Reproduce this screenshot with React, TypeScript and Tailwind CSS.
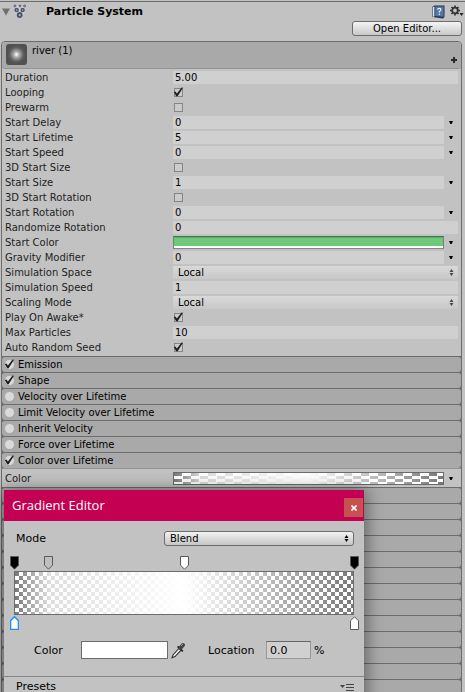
import React from 'react';

type Row = {
  label: string;
  kind: 'text' | 'check' | 'select' | 'color';
  value?: string;
  checked?: boolean;
  menu?: boolean;
};

const rows: Row[] = [
  { label: 'Duration', kind: 'text', value: '5.00' },
  { label: 'Looping', kind: 'check', checked: true },
  { label: 'Prewarm', kind: 'check' },
  { label: 'Start Delay', kind: 'text', value: '0', menu: true },
  { label: 'Start Lifetime', kind: 'text', value: '5', menu: true },
  { label: 'Start Speed', kind: 'text', value: '0', menu: true },
  { label: '3D Start Size', kind: 'check' },
  { label: 'Start Size', kind: 'text', value: '1', menu: true },
  { label: '3D Start Rotation', kind: 'check' },
  { label: 'Start Rotation', kind: 'text', value: '0', menu: true },
  { label: 'Randomize Rotation', kind: 'text', value: '0' },
  { label: 'Start Color', kind: 'color', menu: true },
  { label: 'Gravity Modifier', kind: 'text', value: '0', menu: true },
  { label: 'Simulation Space', kind: 'select', value: 'Local' },
  { label: 'Simulation Speed', kind: 'text', value: '1' },
  { label: 'Scaling Mode', kind: 'select', value: 'Local' },
  { label: 'Play On Awake*', kind: 'check', checked: true },
  { label: 'Max Particles', kind: 'text', value: '10' },
  { label: 'Auto Random Seed', kind: 'check', checked: true },
];

const modules = [
  { label: 'Emission', on: true },
  { label: 'Shape', on: true },
  { label: 'Velocity over Lifetime', on: false },
  { label: 'Limit Velocity over Lifetime', on: false },
  { label: 'Inherit Velocity', on: false },
  { label: 'Force over Lifetime', on: false },
  { label: 'Color over Lifetime', on: true },
];

const toId = (label: string) => label.toLowerCase().replace(/[^a-z0-9]+/g, '-');

const Tick = () => (
  <svg className="pointer-events-none absolute -left-px -top-px hidden peer-checked:block" width="11" height="10" viewBox="0 0 11 10">
    <path d="M0.8 5 L2.4 4.4 L3.9 6.4 L8.6 0.4 L10 0.8 L4.6 9.2 L3.2 9.2 Z" fill="#1e1e1e" />
  </svg>
);

const UpDown = ({ className }: { className: string }) => (
  <svg className={`pointer-events-none absolute ${className}`} width="5" height="7" viewBox="0 0 5 7">
    <path d="M2.5 0 L4.5 3 H0.5 Z M0.5 4 H4.5 L2.5 7 Z" fill="currentColor" />
  </svg>
);

const MenuArrow = ({ label }: { label: string }) => (
  <button aria-label={`${label} mode`} className="flex h-[13px] w-[14px] shrink-0 items-center justify-center">
    <svg width="4" height="3" viewBox="0 0 4 3">
      <path d="M0 0 H4 L2.6 3 H1.4 Z" fill="#000" />
    </svg>
  </button>
);

const PropertyRow = ({ row }: { row: Row }) => {
  const id = toId(row.label);
  return (
    <div className="flex h-[15px] items-center">
      <label htmlFor={id} className="w-[168px] shrink-0 whitespace-nowrap text-[#222]">{row.label}</label>
      {row.kind === 'text' && (
        <input id={id} defaultValue={row.value} className="h-[13px] min-w-0 flex-1 rounded-[1px] bg-[#d0d0d0] px-[2px] text-black outline-none" />
      )}
      {row.kind === 'check' && (
        <span className="relative ml-px h-[9px] w-[9px]">
          <input id={id} type="checkbox" defaultChecked={row.checked} className="peer block h-[9px] w-[9px] appearance-none border border-[#858585] bg-[#cbcbcb]" />
          <Tick />
        </span>
      )}
      {row.kind === 'select' && (
        <span className="relative h-[13px] flex-1">
          <select id={id} defaultValue={row.value} className="block h-[13px] w-full appearance-none rounded-[1px] bg-linear-to-b from-[#d9d9d9] to-[#c8c8c8] px-[5px] text-black outline-none">
            <option>Local</option>
            <option>World</option>
          </select>
          <UpDown className="right-1 top-[3px] text-[#4a4a4a]" />
        </span>
      )}
      {row.kind === 'color' && (
        <button id={id} className="flex h-[13px] flex-1 flex-col border border-t-[#45754c] border-x-[#6a8a6e] border-b-[#858585] bg-white">
          <span className="h-[9px] w-full border-t border-t-[#5cab67] bg-[#6fc97b]"></span>
        </button>
      )}
      {row.menu && <MenuArrow label={row.label} />}
    </div>
  );
};

// Alpha key above the bar points down, colour key below the bar points up
const Key = ({ fill, stroke = '#5a5a5a', up = false }: { fill: string; stroke?: string; up?: boolean }) => (
  <svg width="9" height="14" viewBox="0 0 9 14">
    <path
      d={up ? 'M0.5 13.5 V4.8 L4.5 0.8 L8.5 4.8 V13.5 Z' : 'M0.5 0.5 V9.2 L4.5 13.2 L8.5 9.2 V0.5 Z'}
      fill={fill}
      stroke={stroke}
      strokeWidth={stroke === '#5a5a5a' ? 1 : 1.6}
    />
  </svg>
);

const GradientEditor = () => (
  <section className="absolute left-1 top-[490px] w-[360px] bg-[#c2c2c2] pb-4 text-[11px] text-black shadow-[0_2px_16px_2px_rgba(0,0,0,0.45)]">
    <header className="flex h-[31px] items-center justify-between bg-[#c30052] pl-2 pr-px">
      <h2 className="font-['Open_Sans',sans-serif] text-[13px] text-white">Gradient Editor</h2>
      <button aria-label="Close" className="mt-1 flex h-[19px] w-[19px] items-center justify-center bg-[#c75050]">
        <svg width="6" height="6" viewBox="0 0 6 6">
          <path d="M0.5 0.5 L5.5 5.5 M5.5 0.5 L0.5 5.5" stroke="#fff" strokeWidth="1.6" />
        </svg>
      </button>
    </header>

    <div className="px-[10px]">
      <div className="mt-[10px] flex h-[15px] items-center">
        <label htmlFor="mode" className="w-[150px] pl-[2px]">Mode</label>
        <span className="relative flex-1">
          <select id="mode" className="block h-[15px] w-full appearance-none rounded-[3px] border border-[#6c6c6c] bg-linear-to-b from-[#f2f2f2] to-[#c6c6c6] px-[5px] text-[10px] leading-[12px] outline-none">
            <option>Blend</option>
            <option>Fixed</option>
          </select>
          <UpDown className="right-[5px] top-1 text-black" />
        </span>
      </div>

      <div className="relative mt-[10px] h-[15px]">
        <button aria-label="Alpha 0%" className="absolute left-0 -ml-1"><Key fill="#000" /></button>
        <button aria-label="Alpha 10%" className="absolute left-[10%] -ml-1"><Key fill="#bfbfbf" /></button>
        <button aria-label="Alpha 50%" className="absolute left-1/2 -ml-1"><Key fill="#fff" /></button>
        <button aria-label="Alpha 100%" className="absolute left-full -ml-1"><Key fill="#000" /></button>
      </div>
      <div className="h-[44px] border border-[#6c6c6c] bg-[conic-gradient(#fff_25%,#787878_0_50%,#fff_0_75%,#787878_0)] bg-size-[8px_8px]">
        <div className="h-full bg-[linear-gradient(to_right,rgba(255,255,255,0),rgba(255,255,255,0.75)_10%,#fff_50%,rgba(255,255,255,0))]"></div>
      </div>
      <div className="relative mt-px h-[15px]">
        <button aria-label="Color 0%" className="absolute left-0 -ml-1"><Key up fill="#fff" stroke="#1e90ff" /></button>
        <button aria-label="Color 100%" className="absolute left-full -ml-1"><Key up fill="#fff" /></button>
      </div>

      <div className="mt-[10px] flex h-[18px] items-center">
        <label htmlFor="key-color" className="w-[67px] pl-5">Color</label>
        <button id="key-color" className="h-[18px] w-[87px] border border-[#6c6c6c] bg-white"></button>
        <button aria-label="Pick color" className="ml-[3px]">
          <svg width="15" height="17" viewBox="0 0 15 17">
            <path d="M1 15.8 L2 13 L8 6.2 L10 8.2 L4 14.6 Z" fill="#eee" stroke="#333" strokeWidth="1.1" />
            <path d="M6.6 4.4 L11.8 9.4" stroke="#222" strokeWidth="1.8" />
            <path d="M9.4 6 L12 3" stroke="#444" strokeWidth="4" strokeLinecap="round" />
            <path d="M10 4 L12 2" stroke="#999" strokeWidth="1" />
          </svg>
        </button>
        <label htmlFor="location" className="ml-[22px] w-[58px]">Location</label>
        <input id="location" defaultValue="0.0" className="h-[18px] w-[45px] border border-[#999] border-t-[#666] bg-[#d0d0d0] px-[3px] outline-none" />
        <span className="ml-[3px]">%</span>
      </div>
    </div>

    <div className="mt-[17px] flex h-[21px] items-center justify-between border-t border-[#858585] px-[10px]">
      <h3 className="pl-[2px] leading-[10px]">Presets</h3>
      <button aria-label="Preset options">
        <svg width="14" height="7" viewBox="0 0 14 7">
          <path d="M0 1 H5 L2.5 4 Z" fill="#444" />
          <path d="M6 0.5 H14 M6 3.5 H14 M6 6.5 H14" stroke="#444" strokeWidth="1" />
        </svg>
      </button>
    </div>
  </section>
);

const App = () => {
  return (
    <main className="relative h-screen overflow-hidden bg-[#c2c2c2] pt-px font-['DejaVu_Sans',sans-serif] text-[10px] leading-[13px] text-black">
      <header className="border-t border-[#6c6c6c]">
        <div className="flex h-[19px] items-center pl-[2px] pr-px">
          <button aria-label="Collapse" className="mr-[3px]">
            <svg width="8" height="8" viewBox="0 0 8 8"><path d="M0 0.5 H8 L4 7.5 Z" fill="#6e6e6e" /></svg>
          </button>
          <svg width="14" height="15" viewBox="0 0 14 15" className="mr-[19px]">
            <path d="M1 2 H13 L11 9 L9 14 H5 L3 9 Z" fill="#d4d4d4" />
            <g fill="#aeb8c6" stroke="#4e526c">
              <circle cx="2" cy="2" r="1" strokeWidth="0.9" />
              <circle cx="7" cy="2" r="1" strokeWidth="0.9" />
              <circle cx="11.6" cy="2" r="1" strokeWidth="0.9" />
              <circle cx="3.7" cy="6" r="1.5" strokeWidth="1.5" />
              <circle cx="9.6" cy="6" r="1.5" strokeWidth="1.5" />
              <circle cx="6.7" cy="11" r="2" strokeWidth="1.9" />
            </g>
          </svg>
          <h1 className="flex-1 text-[11px] font-bold">Particle System</h1>
          <a href="#help" aria-label="Help" className="mr-[5px]">
            <svg width="13" height="14" viewBox="0 0 13 14">
              <path d="M0.5 1.5 L2.5 0.5 H12.5 V12 L11 13.5 L0.5 12 Z" fill="#22344f" />
              <path d="M1 2 L2.4 1.5 V11.6 L1 11.8 Z" fill="#dfe6ee" />
              <path d="M3.2 1.4 H11.6 V11.8 L3.2 11 Z" fill="#5478a8" />
              <path d="M5.6 4.6 Q5.8 3.2 7.3 3.2 Q9 3.3 8.8 4.8 Q8.5 5.8 7.3 6.5 V7.6 M7.3 8.8 V10" fill="none" stroke="#fff" strokeWidth="1.1" />
            </svg>
          </a>
          <button aria-label="Settings">
            <svg width="14" height="13" viewBox="0 0 14 13">
              <circle cx="5" cy="5.5" r="2.8" fill="none" stroke="#333" strokeWidth="1.8" />
              <path d="M5 0.5 V3 M5 8 V10.5 M0 5.5 H2.5 M7.5 5.5 H10 M1.5 2 L3.2 3.7 M6.8 7.3 L8.5 9 M8.5 2 L6.8 3.7 M3.2 7.3 L1.5 9" stroke="#333" strokeWidth="1.7" />
              <path d="M9.5 8 H13.5 L11.5 11 Z" fill="#222" />
            </svg>
          </button>
        </div>
        <div className="flex justify-end pr-[3px]">
          <button className="h-[15px] w-[110px] rounded-[3px] border border-[#6c6c6c] bg-linear-to-b from-[#f4f4f4] to-[#c8c8c8] leading-[13px]">Open Editor...</button>
        </div>
      </header>

      <section className="ml-px mr-[3px] mt-[5px] rounded-t-[4px] border border-[#6c6c6c] bg-[#c2c2c2]">
        <div className="flex h-[27px] rounded-[3px] border-b border-[#949494] bg-[#a9a9a9] pl-1 pr-1">
          <span className="mt-[2px] h-[21px] w-[21px] rounded-[3px] bg-[radial-gradient(circle,#fff_0%,#aaa_20%,#5c5c5c_48%,#505050_65%)]"></span>
          <h2 className="ml-[5px] mt-[2px] flex-1">river (1)</h2>
          <button aria-label="Add module" className="mb-[5px] self-end">
            <svg className="block" width="6" height="6" viewBox="0 0 6 6"><path d="M3 0 V6 M0 3 H6" stroke="#2a2a2a" strokeWidth="2" /></svg>
          </button>
        </div>

        <div className="px-[3px] py-px">
          {rows.map((row) => <PropertyRow key={row.label} row={row} />)}
        </div>

        <div className="bg-[#6c6c6c]">
          {modules.map((m) => (
            <label key={m.label} className="flex h-4 items-center rounded-[3px] border-t border-[#6c6c6c] bg-[#a9a9a9] pl-[3px]">
              <span className="relative mr-[4px] h-[9px] w-[9px]">
                <input type="checkbox" defaultChecked={m.on} className="peer block h-[9px] w-[9px] appearance-none rounded-full bg-[#dadada]" />
                <Tick />
              </span>
              {m.label}
            </label>
          ))}
        </div>

        <div className="flex h-[19px] items-center border-t border-[#949494] bg-[#c2c2c2] px-[3px]">
          <label htmlFor="color-over-lifetime" className="w-[168px] shrink-0 text-[#222]">Color</label>
          <button id="color-over-lifetime" className="h-[13px] flex-1 border border-[#6c6c6c] bg-[conic-gradient(#fff_25%,#787878_0_50%,#fff_0_75%,#787878_0)] bg-size-[17px_6px]">
            <span className="block h-full bg-[linear-gradient(to_right,rgba(255,255,255,0),rgba(255,255,255,0.75)_10%,#fff_50%,rgba(255,255,255,0))]"></span>
          </button>
          <MenuArrow label="Color" />
        </div>

        {/* collapsed modules that continue behind the floating window */}
        <div className="bg-[#6c6c6c]">
          {Array.from({ length: 14 }, (_, i) => (
            <div key={i} className="h-4 rounded-[3px] border-t border-[#6c6c6c] bg-[#a9a9a9]"></div>
          ))}
        </div>
      </section>

      <GradientEditor />
    </main>
  );
};

export default App;
